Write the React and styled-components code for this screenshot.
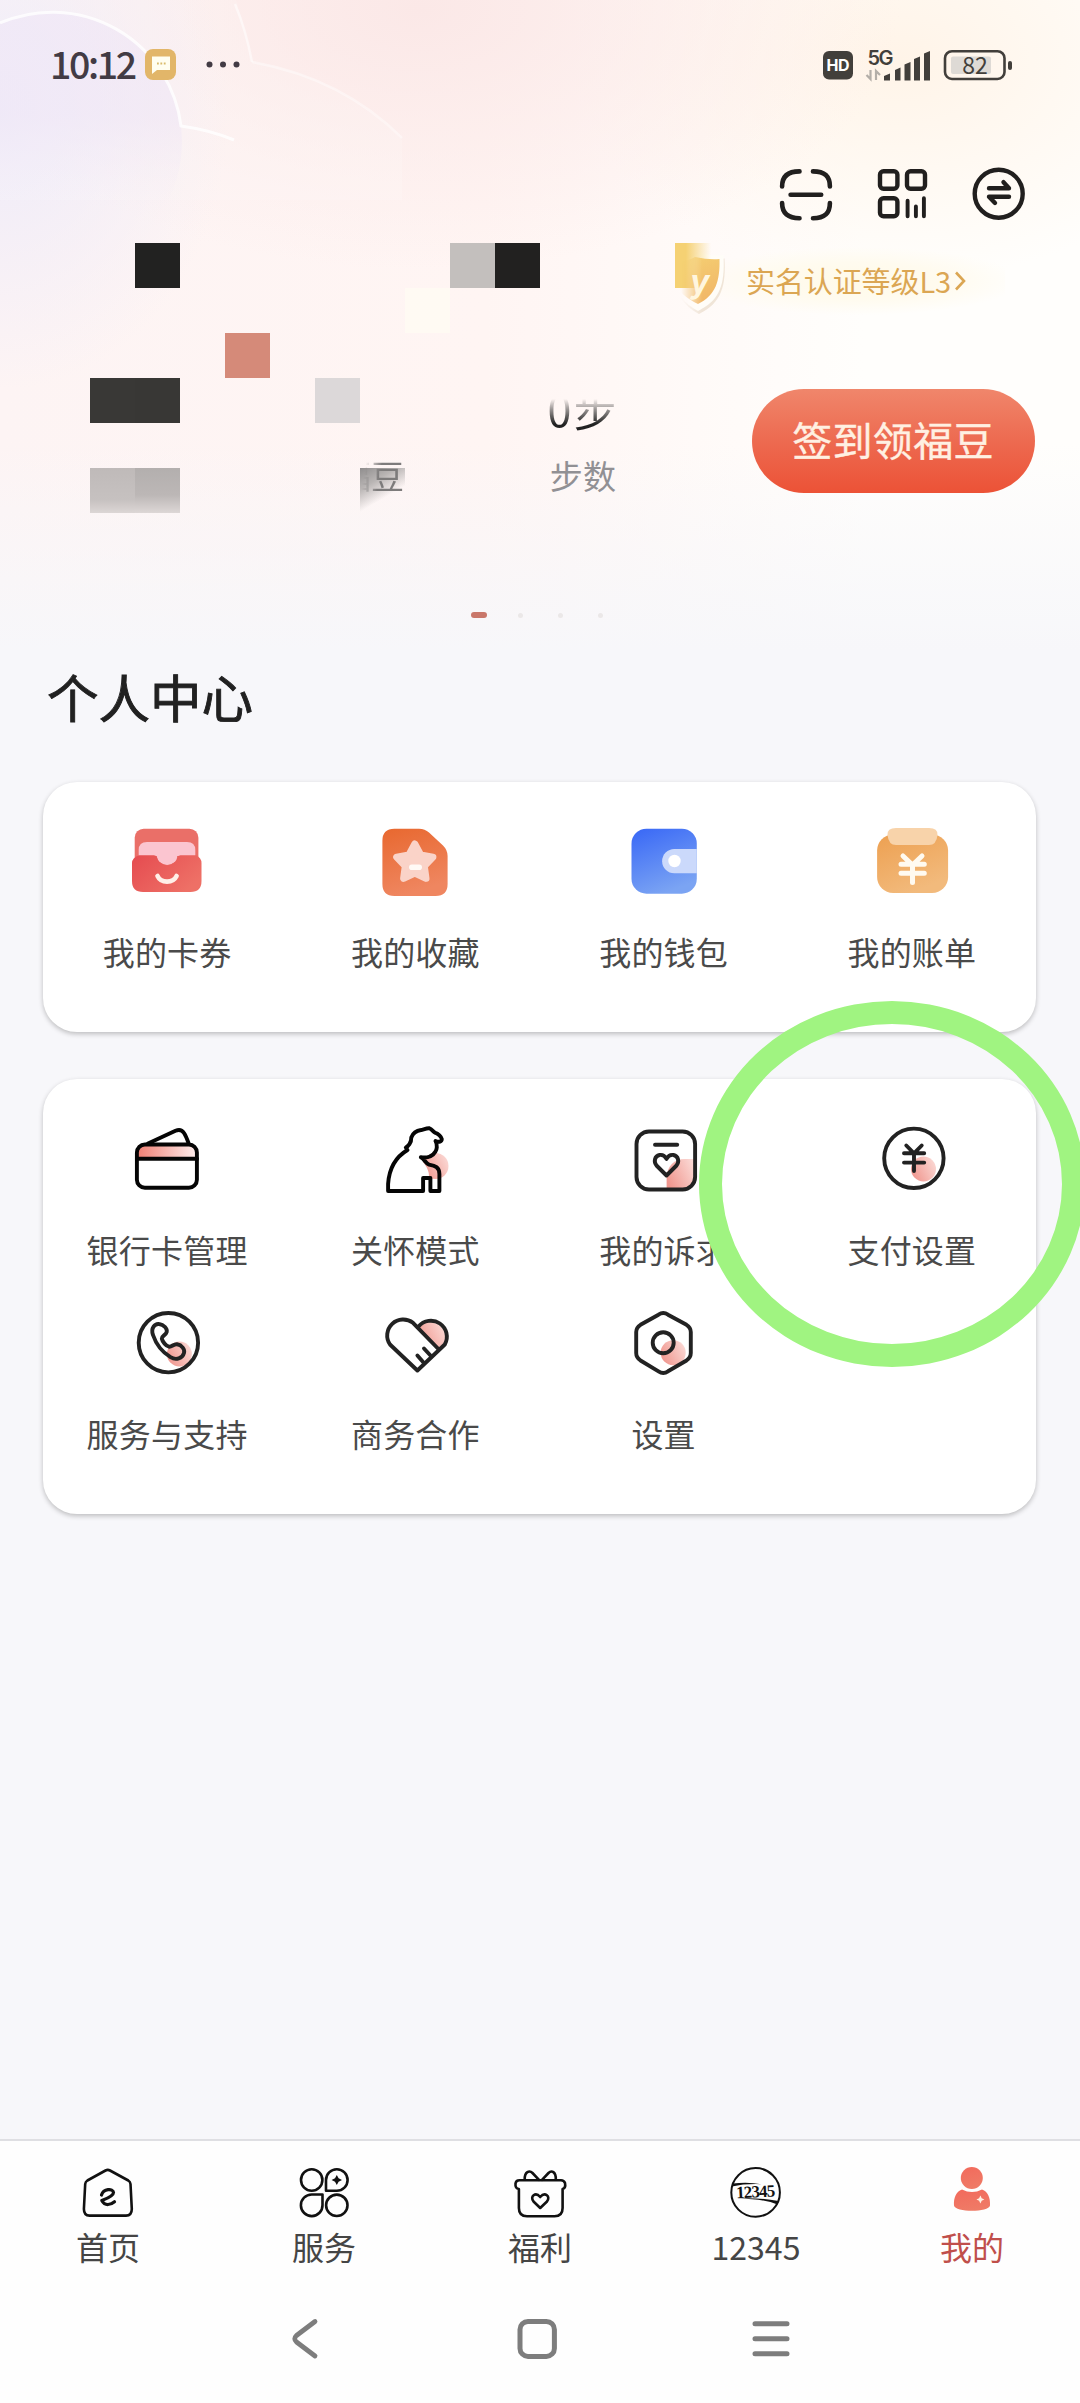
import React from 'react';
import styled, { createGlobalStyle } from 'styled-components';

const App = () => {
  return (
    <Page>
      <GlobalStyle />
      <Header>
        <HeaderArt />
        <HeaderContent>
          <StatusBar>
            <Clock>10:12</Clock>
            <MessageBadge />
            <MoreDots />
            <StatusIcons />
          </StatusBar>
          <Actions>
            <ScanIcon />
            <CodeIcon />
            <SwapIcon />
          </Actions>
          <Profile>
            <Mosaic>
              {blocks.map((b) => (
                <Block key={`${b.col}-${b.row}`} $col={b.col} $row={b.row} $fill={b.fill} />
              ))}
            </Mosaic>
            <ProfileContent>
              <Level>
                <ShieldIcon />
                <LevelText>实名认证等级L3</LevelText>
                <LevelArrow />
              </Level>
              <Stats>
                <Stat>
                  <StatValue />
                  <StatLabel $faded>福豆</StatLabel>
                </Stat>
                <Stat>
                  <StatValue>0步</StatValue>
                  <StatLabel>步数</StatLabel>
                </Stat>
                <SignButton>签到领福豆</SignButton>
              </Stats>
            </ProfileContent>
          </Profile>
          <Pager>
            <PagerDot $active />
            <PagerDot />
            <PagerDot />
            <PagerDot />
          </Pager>
        </HeaderContent>
      </Header>

      <Title>个人中心</Title>

      <Card>
        {assets.map(({ label, Icon }) => (
          <Item key={label}>
            <Icon />
            <Label>{label}</Label>
          </Item>
        ))}
      </Card>
      <Card $tall>
        {tools.map(({ label, Icon }) => (
          <Item key={label}>
            <Icon />
            <Label>{label}</Label>
          </Item>
        ))}
        <Marker />
      </Card>

      <TabBar>
        {tabs.map(({ label, Icon, active }) => (
          <Tab key={label} $active={active}>
            <Icon />
            {label}
          </Tab>
        ))}
      </TabBar>
      <SystemNav>
        <svg width="40" height="44" viewBox="0 0 40 44" fill="none" stroke="#7d7d7d" strokeWidth="4.8" strokeLinecap="round" strokeLinejoin="round">
          <path d="M30 4.5 L11.5 18.5 Q8 21.8 11.5 25 L30 39" />
        </svg>
        <svg width="44" height="44" viewBox="0 0 44 44" fill="none" stroke="#7d7d7d" strokeWidth="5">
          <rect x="5" y="4.4" width="34.4" height="35" rx="8" />
        </svg>
        <svg width="44" height="44" viewBox="0 0 44 44" fill="none" stroke="#7d7d7d" strokeWidth="5" strokeLinecap="round">
          <path d="M6 6.8 H38 M6 21.8 H38 M6 36.8 H38" />
        </svg>
      </SystemNav>
    </Page>
  );
};

const HeaderArt = () => (
  <Art viewBox="0 0 1080 650" fill="none">
    <defs>
      <linearGradient id="bubbleFade" x1="0" y1="0" x2="0" y2="1">
        <stop offset="0.4" stopColor="#efe6f6" stopOpacity="0.6" />
        <stop offset="0.75" stopColor="#f3ebf6" stopOpacity="0" />
      </linearGradient>
    </defs>
    <path d="M0 0 H236 Q246 30 252 62 Q340 76 402 140 V200 H0 Z" fill="#fff" opacity="0.14" />
    <circle cx="52" cy="142" r="130" fill="url(#bubbleFade)" />
    <path d="M0 23 A130 130 0 0 1 181 126 Q210 130 234 140" stroke="#fff" strokeWidth="3" opacity="0.8" />
    <path d="M235 4 Q246 30 252 62" stroke="#fff" strokeWidth="2.5" opacity="0.5" />
    <path d="M252 62 Q342 78 402 138" stroke="#fff" strokeWidth="2.5" opacity="0.4" />
  </Art>
);

const MessageBadge = () => (
  <svg width="31" height="31" viewBox="0 0 31 31">
    <rect width="31" height="31" rx="8" fill="#e2b669" />
    <path d="M7 7.5 H25 V21 H12 L7 25 Z" fill="#fffef0" />
    <path d="M12 14.5 h1.8 M15.4 14.5 h1.8 M18.8 14.5 h1.8" stroke="#d9bb6c" strokeWidth="2" />
  </svg>
);

const MoreDots = () => (
  <Dots width="36" height="10" viewBox="0 0 36 10" fill="#423b44">
    <circle cx="4.5" cy="4.500" r="3" />
    <circle cx="18" cy="4.500" r="3" />
    <circle cx="31.5" cy="4.500" r="3" />
  </Dots>
);

const StatusIcons = () => (
  <svg width="194" height="54" viewBox="820 37 194 54" fill="#423f3b">
    <rect x="823" y="50" width="30" height="28.5" rx="6" />
    <text x="838" y="70" textAnchor="middle" fill="#fff" fontSize="16" fontWeight="700" fontFamily="Inter, sans-serif" textLength="23">HD</text>
    <text x="867.5" y="63.500" fontSize="20" fontWeight="600" fontFamily="Inter, sans-serif" textLength="26">5G</text>
    <path d="M870.5 69 V78 L866.5 74 M876 79 V70 L880 74" fill="none" stroke="#b3aea8" strokeWidth="2.2" />
    <path d="M884 79.5 V75 L890 72.5 V79.5 Z M895 79.5 V69 L900.5 66.5 V79.5 Z M904.5 79.5 V63.5 L910.5 61 V79.5 Z M914 79.5 V58 L920 55.5 V79.5 Z M924 79.5 V52.5 L930 50 V79.5 Z" />
    <rect x="945" y="50.2" width="59.5" height="27.8" rx="7" fill="none" stroke="#423f3b" strokeWidth="2.6" />
    <rect x="951" y="55.5" width="40" height="17.5" rx="2" fill="#dedad5" />
    <text x="975" y="72.8" textAnchor="middle" fontSize="23" fontFamily="'Noto Sans CJK SC', sans-serif">82</text>
    <rect x="1008" y="60" width="4" height="9" rx="2" />
  </svg>
);

const ScanIcon = () => (
  <svg width="56" height="56" viewBox="0 0 56 56" fill="none" stroke="#211f1e" strokeWidth="4.6" strokeLinecap="round">
    <path d="M4.1 19.5 C4.1 9 10 4.4 21.5 4.4 M35 4.4 C46.5 4.4 51.9 9 51.9 19.5 M51.9 36 C51.9 46.5 46.5 51.2 35 51.2 M21.5 51.2 C10 51.2 4.1 46.5 4.1 36 M12.6 27.7 H43.2" />
  </svg>
);

const CodeIcon = () => (
  <svg width="56" height="56" viewBox="0 0 56 56" fill="none" stroke="#211f1e" strokeWidth="4.4" strokeLinecap="round">
    <rect x="5" y="4.2" width="17.4" height="17.6" rx="3.5" />
    <rect x="32" y="4.2" width="18" height="17.6" rx="3.5" />
    <rect x="5" y="31.3" width="17.4" height="18" rx="3.5" />
    <path d="M32.600 33.8 V49.2 M40.900 39.4 V49.2 M48.900 31.2 V49.2" strokeWidth="3.9" />
  </svg>
);

const SwapIcon = () => (
  <svg width="56" height="56" viewBox="0 0 56 56" fill="none" stroke="#211f1e" strokeWidth="4.400" strokeLinecap="round" strokeLinejoin="round">
    <circle cx="27.7" cy="26.7" r="24" />
    <path d="M18 21.2 H38 L32.5 15.2 M38 29.8 H18 L24 36" />
  </svg>
);

const ShieldIcon = () => (
  <Shield width="60" height="76" viewBox="0 0 60 76">
    <defs>
      <linearGradient id="shieldFill" x1="0" y1="0" x2="0.4" y2="1">
        <stop offset="0" stopColor="#f5d173" />
        <stop offset="1" stopColor="#f1b868" />
      </linearGradient>
      <linearGradient id="shieldBlock" x1="0" y1="0" x2="1" y2="0">
        <stop offset="0.3" stopColor="#f5d173" />
        <stop offset="1" stopColor="#f5d173" stopOpacity="0" />
      </linearGradient>
      <linearGradient id="shieldFade" x1="0" y1="0" x2="1" y2="0">
        <stop offset="0.1" stopColor="#fff" stopOpacity="0" />
        <stop offset="0.45" stopColor="#fff" />
      </linearGradient>
      <mask id="shieldMask">
        <rect width="60" height="76" fill="url(#shieldFade)" />
      </mask>
    </defs>
    <g mask="url(#shieldMask)">
      <path d="M23 12 Q36 16 48.5 13.5 C50 40 46 58 23 69 C10 62 2 52 0 40 V18 Q12 18 23 12 Z" fill="#e9dccb" transform="translate(1 2)" opacity="0.7" />
      <path d="M23 8 Q36 14 48.5 12 C50 40 46 57 23 68 C10 61 2 51 0 40 V17 Q12 17 23 10 Z" fill="#fffdf8" />
    </g>
    <rect width="36" height="45" fill="url(#shieldBlock)" />
    <g mask="url(#shieldMask)">
      <path d="M20 14 Q34 17 44.5 16 C45 38 41 52 23 61 C12 56 4 48 0 43 V19 Q12 19 20 14 Z" fill="url(#shieldFill)" />
    </g>
    <text x="25" y="50" textAnchor="middle" fontSize="32" fontWeight="700" fontStyle="italic" fontFamily="Inter, sans-serif" fill="#fff6df">y</text>
  </Shield>
);

const LevelArrow = () => (
  <svg width="12" height="22" viewBox="0 0 12 22" fill="none" stroke="#dba653" strokeWidth="2.6">
    <path d="M1 2.5 L9 11 L1 19.5" />
  </svg>
);

const CouponIcon = () => (
  <svg width="80" height="80" viewBox="0 0 80 80">
    <defs>
      <linearGradient id="couponFront" x1="0" y1="0" x2="1" y2="0.6">
        <stop offset="0" stopColor="#e54b50" />
        <stop offset="1" stopColor="#ee7066" />
      </linearGradient>
    </defs>
    <rect x="7.7" y="6.7" width="63.7" height="40" rx="9" fill="#ea6f68" />
    <path d="M11.7 34 V28 Q11.7 20 20 20 H60 Q68.3 20 68.3 28 V34 H50 L51 40 H29 L30 34 Z" fill="#fbc5d0" />
    <circle cx="40.2" cy="33.5" r="9.6" fill="#fbc5d0" />
    <path d="M12 33.300 H27 Q29.6 33.3 30.4 36 C33 45.5 47.500 45.5 50 36 Q50.8 33.3 53.400 33.3 H69 Q74.500 36 74.500 41 V59 Q74.500 70 63.500 70 H16 Q5 70 5 59 V41 Q5 36 12 33.300 Z" fill="url(#couponFront)" />
    <path d="M30.5 54 C34 61.500 46 61.500 49.600 54" fill="none" stroke="#fff0e8" strokeWidth="4.600" strokeLinecap="round" />
  </svg>
);

const FavoriteIcon = () => (
  <svg width="80" height="80" viewBox="0 0 80 80">
    <defs>
      <linearGradient id="favoriteFill" x1="0" y1="0" x2="0.3" y2="1">
        <stop offset="0" stopColor="#e8682f" />
        <stop offset="1" stopColor="#ef8660" />
      </linearGradient>
    </defs>
    <path d="M19.400 6.700 H44 Q50 6.700 54 10.500 L68 23.500 Q72.600 28 72.600 34 V62 Q72.600 74 60.600 74 H19.400 Q7.400 74 7.400 62 V18.700 Q7.400 6.700 19.400 6.700 Z" fill="url(#favoriteFill)" />
    <path d="M39.8 22 L45.700 32.900 L57.900 35.100 L49.300 44.100 L51 56.400 L39.800 51 L28.600 56.400 L30.300 44.100 L21.700 35.100 L33.900 32.900 Z" fill="#fad3c8" stroke="#fad3c8" strokeWidth="7" strokeLinejoin="round" />
    <rect x="34" y="42.5" width="13" height="5.6" rx="2.8" fill="#fffaf6" />
  </svg>
);

const WalletIcon = () => (
  <svg width="80" height="80" viewBox="0 0 80 80">
    <defs>
      <linearGradient id="walletFill" x1="0.1" y1="0" x2="0.5" y2="1">
        <stop offset="0" stopColor="#3a69f6" />
        <stop offset="1" stopColor="#7ba4f3" />
      </linearGradient>
    </defs>
    <rect x="7.500" y="6.700" width="65.300" height="65" rx="15" fill="url(#walletFill)" />
    <path d="M72.800 27 H50.300 A12.150 12.150 0 0 0 50.300 51.300 H72.800 Z" fill="#cbd9fb" />
    <circle cx="50.500" cy="39" r="6.200" fill="#fff" />
  </svg>
);

const BillIcon = () => (
  <svg width="80" height="80" viewBox="0 0 80 80">
    <defs>
      <linearGradient id="billFill" x1="0" y1="0" x2="0.5" y2="1">
        <stop offset="0" stopColor="#eda051" />
        <stop offset="1" stopColor="#f2ba7c" />
      </linearGradient>
    </defs>
    <rect x="5.100" y="12.500" width="71" height="58.500" rx="16" fill="url(#billFill)" />
    <path d="M24 6 H57 Q66 6 65.500 13 Q64.500 23 57 23 H24 Q16.500 23 15.500 13 Q15 6 24 6 Z" fill="#f8d3aa" />
    <path d="M31 34 L40.500 43 L50 34 M29 42.300 H52.300 M29 51.300 H52.300 M40.500 43 V60.500" fill="none" stroke="#fffaf0" strokeWidth="5" strokeLinecap="round" />
  </svg>
);

const BlushDefs = ({ id }) => (
  <defs>
    <linearGradient id={id} x1="0" y1="0.7" x2="1" y2="0.2">
      <stop offset="0" stopColor="#f0968e" />
      <stop offset="1" stopColor="#fbdad6" />
    </linearGradient>
  </defs>
);

const BankCardIcon = () => (
  <LineIcon>
    <defs>
      <linearGradient id="bankStripe" x1="0" y1="0" x2="1" y2="0">
        <stop offset="0" stopColor="#ef8075" />
        <stop offset="1" stopColor="#fdeceb" />
      </linearGradient>
    </defs>
    <rect x="11" y="25" width="58" height="13" fill="url(#bankStripe)" stroke="none" />
    <path d="M21 23.500 L48.500 10.800 Q54 8.500 57 13 Q59 16 61.500 23" />
    <rect x="9.900" y="24.500" width="60" height="43.200" rx="8" />
    <path d="M10 38.700 H70" />
  </LineIcon>
);

const CareIcon = () => (
  <LineIcon>
    <BlushDefs id="careBlush" />
    <circle cx="60.500" cy="46" r="13" fill="url(#careBlush)" stroke="none" />
    <path d="M34 31 C28 34 15 45 15 69 H46 V56 H54 C54 48 48 42 44 38 Z" fill="#fff" stroke="none" />
    <path d="M13.100 71 V64 C14 50 19 38 32.500 30 L30.800 27.500 C33 26.500 36.500 23 36.300 17.500 C38 13 42 10.500 46 10 C49 9.300 52 8 54.500 8.300 C57 9 58 12 60.500 12.900 C63 13.500 66.500 17 66.800 19 C66.800 21.500 64 22.600 60.500 21 C63 25 61.500 30 60.500 31.500 C57 37.500 52 38 45.800 37.300 C49.500 39 50 43 54.100 44.600 C60 45.800 64.400 47 64.400 54 V71 H55.400 V58 H48.100 V71 Z" />
  </LineIcon>
);

const AppealIcon = () => (
  <LineIcon $soft>
    <BlushDefs id="appealBlush" />
    <path d="M42.600 69 V58 C43 46 50 39 61 39 H71 V58 Q71 69 59 69 Z" fill="url(#appealBlush)" stroke="none" />
    <rect x="12.500" y="11.500" width="58.600" height="58" rx="12.500" />
    <path d="M31 24.700 H53.200" />
    <path d="M42.500 55.500 L32.500 45.500 C29.500 42 30.500 36 35.500 35 C39 34.500 41.500 37 42.500 39 C43.500 37 46 34.500 49.500 35 C54.500 36 55.500 42 52.500 45.500 Z" />
  </LineIcon>
);

const PayIcon = () => (
  <LineIcon $soft>
    <BlushDefs id="payBlush" />
    <circle cx="51.500" cy="49" r="12.500" fill="url(#payBlush)" stroke="none" />
    <circle cx="41.900" cy="38.300" r="29.700" />
    <path d="M34.300 25.500 L42 33.300 L49.700 25.500 M32 33.300 H52.200 M32 42.600 H52.200 M42 33.300 V51" />
  </LineIcon>
);

const SupportIcon = () => (
  <LineIcon $soft>
    <BlushDefs id="supportBlush" />
    <circle cx="52.400" cy="50" r="12.500" fill="url(#supportBlush)" stroke="none" />
    <circle cx="41.400" cy="38.700" r="29.700" />
    <path d="M26 31 C23.500 24 28 19.500 32 20 C37 20.500 40.500 25 39.700 28 C39 31 34.500 32 34.800 34.500 C35.500 38 39 42 42 42.700 C45 43 46.500 40 50 40.300 C55 41 58 45.500 57 49 C55.500 54.500 49 56.500 43.500 53.200 C36 48.500 29 40 26 31 Z" />
  </LineIcon>
);

const BusinessIcon = () => (
  <LineIcon $soft>
    <BlushDefs id="businessBlush" />
    <path d="M43.500 23 A15.800 15.800 0 0 1 69.500 40 L63.400 44.500 Z" fill="url(#businessBlush)" stroke="none" />
    <path d="M63.400 45 L38 18.800 A16 16 0 0 0 15 40.500 L42.400 66.500 L69.800 40.500 A16 16 0 0 0 43.500 22.500" />
    <path d="M49 44.500 L55.500 51.500 M42.400 51.500 L48.500 58.500" />
  </LineIcon>
);

const SettingsIcon = () => (
  <LineIcon $soft>
    <BlushDefs id="settingsBlush" />
    <circle cx="49.200" cy="48.700" r="12.500" fill="url(#settingsBlush)" stroke="none" />
    <path d="M34.500 10.700 Q39.300 7.500 44 10.700 L62.500 20.800 Q66.800 23.500 66.800 28 V49 Q66.800 53.500 62.500 56.500 L44 67.300 Q39.300 70.500 34.500 67.300 L16.500 56.500 Q12.200 53.500 12.200 49 V28 Q12.200 23.500 16.500 20.800 Z" />
    <circle cx="39.200" cy="38.700" r="10.500" />
  </LineIcon>
);

const HomeIcon = () => (
  <TabIcon>
    <path d="M25.500 5.500 Q27.800 4.300 30 5.500 L48.300 15.500 Q50.300 16.800 50.500 19 L51.800 44 Q51.800 50.600 46 50.600 H9.600 Q3.900 50.600 3.900 44 L5.200 19 Q5.400 16.800 7.400 15.500 Z" />
    <path d="M21.500 30 C23.500 23.500 33 23 33.500 27.500 C33.500 31.500 23 35 21.800 35.500 C25 41.500 31 39.800 34.500 36.800" strokeWidth="3.200" />
  </TabIcon>
);

const ServiceIcon = () => (
  <TabIcon>
    <circle cx="15.700" cy="15" r="10.700" />
    <path d="M30 25.800 V15 A10.800 10.800 0 1 1 40.800 25.800 Z" />
    <path d="M26.500 29.500 V40 A10.800 10.800 0 1 1 15.700 29.500 Z" />
    <circle cx="40.800" cy="40.300" r="10.700" />
    <path d="M40.800 10 L42.600 13.300 L46 15 L42.600 16.800 L40.800 20 L39 16.800 L35.600 15 L39 13.300 Z" fill="#111" stroke="none" />
  </TabIcon>
);

const WelfareIcon = () => (
  <TabIcon>
    <path d="M6.900 24 V43 Q6.900 51.300 15 51.300 H42.500 Q50.600 51.300 50.600 43 V24 Q54 23 53 18 Q52 15.200 49 15.200 H7.500 Q4 15.200 3.500 18.500 Q3 23.500 6.900 24 Z" />
    <path d="M12.700 14.500 C12.500 6.500 17.500 5 20.500 8 L27 14.800 M30 14.800 L36.500 8 C39.500 5 44 6.500 43.800 14.500" />
    <path d="M28.200 43 L21.500 36.500 C17.500 31.500 23.500 26.500 28.200 32 C33 26.500 39 31.500 35 36.500 Z" />
  </TabIcon>
);

const HotlineIcon = () => (
  <TabIcon>
    <circle cx="27.600" cy="27.400" r="24.300" strokeWidth="2" />
    <path d="M4.500 18.500 Q20 16.500 33.500 19.200 Q17 18.500 4 21.500 Z M10 33.500 Q32 32.500 50.500 36 L49.500 39.500 Q36 33.800 10 33.500 Z" fill="#111" stroke="none" />
    <text x="27.700" y="32.300" textAnchor="middle" fontSize="17" fontWeight="700" fontFamily="'Liberation Serif', serif" fill="#111" stroke="none" textLength="39" transform="rotate(-3 28 28)">12345</text>
  </TabIcon>
);

const MineIcon = () => (
  <TabIcon>
    <defs>
      <linearGradient id="mineFill" x1="0" y1="0" x2="0.3" y2="1">
        <stop offset="0" stopColor="#f26a5c" />
        <stop offset="1" stopColor="#ef7a66" />
      </linearGradient>
    </defs>
    <circle cx="27.800" cy="13" r="11" fill="url(#mineFill)" stroke="none" />
    <path d="M18 24.500 Q28 29.500 38 24.500 C44 26.500 46.500 33 46 40.500 C45 47.500 11 47.500 10 40.500 C9.500 33 12 26.500 18 24.500 Z" fill="url(#mineFill)" stroke="none" />
    <path d="M36.400 30.500 L37.700 33.200 L40.400 34.500 L37.700 35.800 L36.400 38.500 L35.100 35.800 L32.400 34.500 L35.100 33.200 Z" fill="#fff1e4" stroke="none" />
  </TabIcon>
);

// Colour blocks on a 24 column grid of 45px cells
const blocks = [
  { col: 4, row: 1, fill: '#222221' },
  { col: 11, row: 1, fill: '#c3bfbd' },
  { col: 12, row: 1, fill: '#222120' },
  { col: 10, row: 2, fill: 'rgba(255, 253, 244, 0.6)' },
  { col: 6, row: 3, fill: '#d58a79' },
  { col: 3, row: 4, fill: '#393836' },
  { col: 4, row: 4, fill: '#383735' },
  { col: 8, row: 4, fill: '#dcd8d9' },
  { col: 3, row: 6, fill: 'linear-gradient(#bfbab9, #c6c1c0 70%, #dcd6d5)' },
  { col: 4, row: 6, fill: 'linear-gradient(#b3afae, #bcb7b6 60%, #ddd7d6)' },
  { col: 9, row: 6, fill: 'linear-gradient(150deg, #8f8d8d, #b9b5b4 30%, rgba(253, 245, 243, 0) 62%)' },
];

const assets = [
  { label: '我的卡券', Icon: CouponIcon },
  { label: '我的收藏', Icon: FavoriteIcon },
  { label: '我的钱包', Icon: WalletIcon },
  { label: '我的账单', Icon: BillIcon },
];

const tools = [
  { label: '银行卡管理', Icon: BankCardIcon },
  { label: '关怀模式', Icon: CareIcon },
  { label: '我的诉求', Icon: AppealIcon },
  { label: '支付设置', Icon: PayIcon },
  { label: '服务与支持', Icon: SupportIcon },
  { label: '商务合作', Icon: BusinessIcon },
  { label: '设置', Icon: SettingsIcon },
];

const tabs = [
  { label: '首页', Icon: HomeIcon },
  { label: '服务', Icon: ServiceIcon },
  { label: '福利', Icon: WelfareIcon },
  { label: '12345', Icon: HotlineIcon },
  { label: '我的', Icon: MineIcon, active: true },
];

const GlobalStyle = createGlobalStyle`
  body {
    margin: 0;
    background: #f7f7fa;
    font-family: "Noto Sans CJK SC", sans-serif;
  }

  * {
    box-sizing: border-box;
  }
`

const Page = styled.div`
  width: 1080px;
  height: 2403px;
  overflow: hidden;
  display: flex;
  flex-direction: column;
  background: #f7f7fa;
`

const Header = styled.header`
  display: grid;
  height: 650px;
  background:
    linear-gradient(rgba(247, 247, 250, 0) 68%, #f7f7fa 100%),
    radial-gradient(ellipse 230px 280px at 0 110px, #eeebf9 0%, rgba(240, 232, 247, 0) 100%),
    radial-gradient(ellipse 480px 260px at 420px 10px, #fbe8e7 0%, rgba(251, 232, 231, 0) 100%),
    radial-gradient(ellipse 330px 220px at 900px 60px, #fff4e8 0%, rgba(255, 244, 232, 0) 100%),
    linear-gradient(90deg, #fdf4f4 0%, #fff5f3 45%, #fffefc 80%);
`

const Art = styled.svg`
  grid-area: 1 / 1;
  width: 1080px;
  height: 650px;
`

const HeaderContent = styled.div`
  grid-area: 1 / 1;
  display: flex;
  flex-direction: column;
`

const StatusBar = styled.div`
  height: 129px;
  padding: 0 66px 0 50px;
  display: flex;
  align-items: center;

  svg:last-child {
    margin-left: auto;
  }
`

const Clock = styled.span`
  width: 95px;
  padding-bottom: 4px;
  font-size: 37.5px;
  font-weight: 500;
  letter-spacing: -2.4px;
  line-height: 44px;
  color: #423b44;
`

const Dots = styled.svg`
  margin-left: 29px;
`

const Actions = styled.div`
  display: flex;
  justify-content: flex-end;
  gap: 40.5px;
  padding: 38px 53px 0 0;
`

const Profile = styled.section`
  display: grid;
  margin-top: 20px;
`

const Mosaic = styled.div`
  grid-area: 1 / 1;
  display: grid;
  grid-template-columns: repeat(24, 45px);
  grid-template-rows: repeat(6, 45px);
`

const Block = styled.span`
  grid-column: ${(props) => props.$col};
  grid-row: ${(props) => props.$row};
  background: ${(props) => props.$fill};
`

const ProfileContent = styled.div`
  grid-area: 1 / 1;
`

const Level = styled.div`
  display: flex;
  align-items: center;
  height: 76px;
  margin-left: 675px;
  width: 330px;
  background: radial-gradient(ellipse 50% 45% at 55% 50%, #fffae8 0%, #fffbef 55%, rgba(255, 252, 245, 0) 100%);
`

const Shield = styled.svg`
  flex: none;
  margin-right: 11px;
`

const LevelText = styled.span`
  padding-bottom: 2px;
  font-size: 29px;
  line-height: 40px;
  letter-spacing: -0.1px;
  color: #dba653;
  white-space: nowrap;
  margin-right: 4px;
`

const Stats = styled.div`
  display: flex;
  align-items: flex-start;
  padding: 67px 0 0 265px;
`

const Stat = styled.div`
  width: 212px;
  display: flex;
  flex-direction: column;
  align-items: center;
`

const StatValue = styled.div`
  height: 50px;
  margin-top: -3px;
  line-height: 50px;
  font-size: 43px;
  letter-spacing: 2px;
  color: transparent;
  background: linear-gradient(rgba(34, 34, 34, 0) 32%, rgba(34, 34, 34, 0.45) 52%, #222 82%);
  background-clip: text;
  -webkit-background-clip: text;
`

const StatLabel = styled.div`
  margin-top: 22px;
  line-height: 40px;
  font-size: 33px;
  letter-spacing: 0.3px;
  color: ${(props) => (props.$faded ? 'transparent' : '#919094')};
  ${(props) => props.$faded && `
    background: linear-gradient(100deg, rgba(120, 118, 118, 0) 40%, #7d7b7b 62%);
    background-clip: text;
    -webkit-background-clip: text;
  `}
`

const SignButton = styled.button`
  margin: 3px 0 0 62.5px;
  width: 283px;
  height: 104px;
  padding: 0 0 4px;
  border: none;
  border-radius: 52px;
  background: linear-gradient(#f0866b, #ed6a50 50%, #ec5236);
  color: #fff0e2;
  font-family: inherit;
  font-size: 40px;
  letter-spacing: 0.3px;
  -webkit-text-stroke: 0.4px #fff0e2;
  white-space: nowrap;
`

const Pager = styled.div`
  display: flex;
  align-items: center;
  gap: 35px;
  margin: 99px 0 0 471px;
`

const PagerDot = styled.span`
  width: ${(props) => (props.$active ? '16px' : '5px')};
  height: ${(props) => (props.$active ? '6px' : '5px')};
  margin-right: ${(props) => (props.$active ? '-4px' : '0')};
  border-radius: 3px;
  background: ${(props) => (props.$active ? '#c9776a' : '#ebe8e8')};
`

const Title = styled.h1`
  margin: 10px 0 0 47px;
  height: 72px;
  line-height: 72px;
  font-size: 51.5px;
  font-weight: 400;
  -webkit-text-stroke: 0.9px #212121;
  color: #212121;
`

const Card = styled.section`
  position: relative;
  flex: none;
  width: 993px;
  height: ${(props) => (props.$tall ? '435px' : '250px')};
  margin: 50px 0 0 43px;
  padding-top: ${(props) => (props.$tall ? '41px' : '40px')};
  display: grid;
  grid-template-columns: repeat(4, 1fr);
  align-content: start;
  row-gap: 35px;
  background: #fff;
  border-radius: 34px;
  box-shadow: 0 2px 5px rgba(0, 0, 0, 0.24);

  & + & {
    margin-top: 47px;
  }
`

const Item = styled.div`
  display: flex;
  flex-direction: column;
  align-items: center;
  gap: 29px;
`

const Label = styled.span`
  height: 40px;
  line-height: 40px;
  font-size: 32px;
  letter-spacing: 0.2px;
  color: #4a4a4a;
  white-space: nowrap;
`

const LineIcon = styled.svg.attrs({ width: 80, height: 80, viewBox: '0 0 80 80' })`
  fill: none;
  stroke: ${(props) => (props.$soft ? '#222' : '#050505')};
  stroke-width: 3.9px;
  stroke-linecap: round;
  stroke-linejoin: round;
`

// Hand-drawn ring round the payment entry
const Marker = styled.span`
  position: absolute;
  top: -78px;
  left: 656px;
  width: 386px;
  height: 366px;
  border: 23px solid #a0f481;
  border-radius: 50%;
`

const TabBar = styled.nav`
  margin-top: auto;
  flex: none;
  height: 142px;
  padding-top: 24px;
  display: grid;
  grid-template-columns: repeat(5, 1fr);
  background: #fefefe;
  border-top: 2px solid #dfdfe3;
`

const Tab = styled.a`
  display: flex;
  flex-direction: column;
  align-items: center;
  gap: 5px;
  font-size: 32px;
  line-height: 40px;
  color: ${(props) => (props.$active ? '#c04f4b' : '#454545')};
`

const TabIcon = styled.svg.attrs({ width: 56, height: 56, viewBox: '0 0 56 56' })`
  fill: none;
  stroke: #111;
  stroke-width: 2.6px;
  stroke-linecap: round;
  stroke-linejoin: round;
`

const SystemNav = styled.div`
  flex: none;
  height: 122px;
  padding: 36px 3px 0 0;
  display: flex;
  justify-content: center;
  gap: 190px;
  background: #fefefe;
`

export default App;
